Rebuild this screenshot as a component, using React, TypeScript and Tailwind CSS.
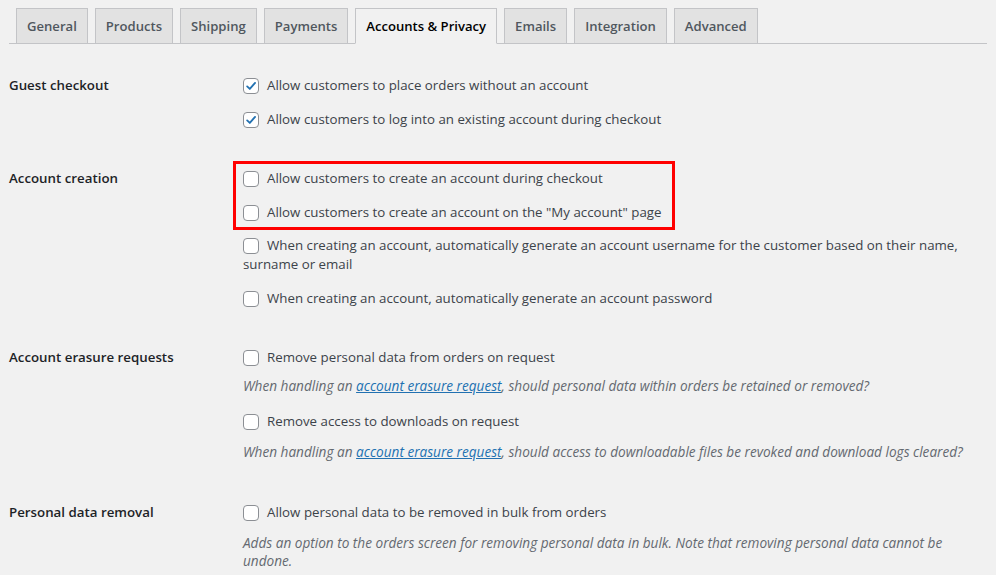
import React from 'react'

const font = { fontFamily: '"Open Sans", "Noto Sans", sans-serif' }

const tabs = ['General', 'Products', 'Shipping', 'Payments', 'Accounts & Privacy', 'Emails', 'Integration', 'Advanced']

function Checkbox({ checked }: { checked?: boolean }) {
  return (
    <span className="mt-[2px] flex h-4 w-4 shrink-0 items-center justify-center rounded-[4px] border border-[#8c8f94] bg-white">
      {checked && (
        <svg viewBox="0 0 20 20" className="h-[18px] w-[18px]">
          <path d="M4.5 10.5 L8.3 14.2 L15.8 5.6" fill="none" stroke="#2271b1" strokeWidth="2.6" strokeLinecap="round" strokeLinejoin="round" />
        </svg>
      )}
    </span>
  )
}

function Option({ label, checked }: { label: React.ReactNode; checked?: boolean }) {
  return (
    <div className="text-[13.3px] leading-[19px] text-[#3c434a]">
      <span className="float-left mr-2"><Checkbox checked={checked} /></span>
      {label}
    </div>
  )
}

function Desc({ children, mt = 'mt-[11px]' }: { children: React.ReactNode; mt?: string }) {
  return <p className={mt + ' text-[13.6px] italic leading-[18px] text-[#646970]'}>{children}</p>
}

function Link({ children }: { children: React.ReactNode }) {
  return <a className="text-[#2271b1] underline">{children}</a>
}

function Section({ title, children }: { title: string; children: React.ReactNode }) {
  return (
    <div className="flex">
      <div className="w-[234px] shrink-0 text-[13.3px] font-semibold leading-[19px] text-[#1d2327]">{title}</div>
      <div className="flex-1 pr-6">{children}</div>
    </div>
  )
}

export default function App() {
  return (
    <div className="min-h-[575px] w-[996px] overflow-hidden bg-[#f1f1f1]" style={font}>
      {/* Tabs */}
      <div className="mx-[9px] flex gap-[7px] border-b border-[#c3c4c7] pl-[7px] pt-[8px]">
        {tabs.map(t => {
          const active = t === 'Accounts & Privacy'
          return (
            <div
              key={t}
              className={
                active
                  ? '-mb-px flex h-[36px] items-center border border-b-[#f1f1f1] border-[#c3c4c7] bg-[#f1f1f1] px-[10px] pt-[2px] text-[13.1px] font-semibold text-[#000]'
                  : 'flex h-[35px] items-center border border-b-0 border-[#c3c4c7] bg-[#e2e2e2] px-[10px] pt-[2px] text-[13.1px] font-semibold text-[#50575e]'
              }
            >
              {t}
            </div>
          )
        })}
      </div>

      <div className="flex flex-col pl-[9px] pt-[32px]">
        <Section title="Guest checkout">
          <div className="flex flex-col gap-[15px]">
            <Option checked label="Allow customers to place orders without an account" />
            <Option checked label="Allow customers to log into an existing account during checkout" />
          </div>
        </Section>

        <div className="mt-[40px]">
          <Section title="Account creation">
            <div className="flex flex-col gap-[15px]">
              <div className="-mx-[10px] -my-[8px] w-[442px] border-[3px] border-[#ff0000] px-[7px] py-[5px]">
                <div className="flex flex-col gap-[15px]">
                  <Option label="Allow customers to create an account during checkout" />
                  <Option label={'Allow customers to create an account on the "My account" page'} />
                </div>
              </div>
              <div className="-mt-px">
                <Option label="When creating an account, automatically generate an account username for the customer based on their name, surname or email" />
              </div>
              <Option label="When creating an account, automatically generate an account password" />
            </div>
          </Section>
        </div>

        <div className="mt-[40px]">
          <Section title="Account erasure requests">
            <Option label="Remove personal data from orders on request" />
            <Desc mt="mt-[10px]">
              When handling an <Link>account erasure request</Link>, should personal data within orders be retained or removed?
            </Desc>
            <div className="mt-[17px]">
              <Option label="Remove access to downloads on request" />
            </div>
            <Desc mt="mt-[12px]">
              When handling an <Link>account erasure request</Link>, should access to downloadable files be revoked and download logs cleared?
            </Desc>
          </Section>
        </div>

        <div className="mt-[42px]">
          <Section title="Personal data removal">
            <Option label="Allow personal data to be removed in bulk from orders" />
            <Desc mt="mt-[12px]">
              Adds an option to the orders screen for removing personal data in bulk. Note that removing personal data cannot be undone.
            </Desc>
          </Section>
        </div>
      </div>
    </div>
  )
}
